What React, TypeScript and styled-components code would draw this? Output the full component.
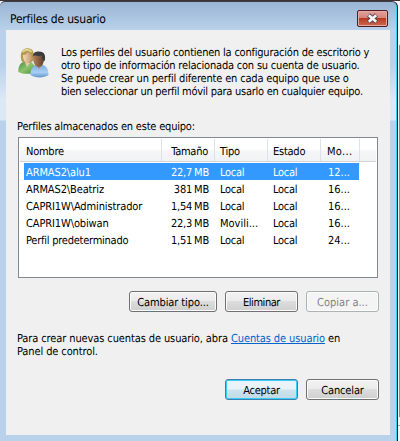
import React from "react";
import styled, { createGlobalStyle } from "styled-components";

const Global = createGlobalStyle`
  * { box-sizing: border-box; }
  body { margin: 0; background: #f4f4f4; overflow: hidden; }
`;

const Desktop = styled.div`
  width: 400px;
  height: 441px;
  display: flex;
  padding-top: 1px;
  background:
    linear-gradient(#8b8f94, #8b8f94) 399px 45px / 1px 372px no-repeat,
    linear-gradient(#a5a8ab, #a5a8ab) 398px 425px / 2px 1px no-repeat,
    #f4f4f4;
  box-shadow: inset 0 1px #3b3336;
  font: 11px/13px "DejaVu Sans Condensed", "DejaVu Sans", sans-serif;
  font-stretch: condensed;
  text-rendering: geometricPrecision;
  color: #000;
`;

const Window = styled.div`
  width: 398px;
  height: 440px;
  display: flex;
  flex-direction: column;
  padding: 1px 6px 6px;
  border-right: 1px solid #121c26;
  border-top: 1px solid #413c44;
  border-radius: 5px 6px 0 0;
  box-shadow: inset -1px 0 #2fd2f8;
  background: linear-gradient(#9ab5d4 0, #b9d1ea 28px, #b9d1ea 62px, #dce8f6 98px, #dce8f6 118px, #b9d1ea 119px);
`;

const TitleBar = styled.header`
  height: 27px;
  flex: none;
  display: flex;
  align-items: flex-start;
  justify-content: space-between;
  padding: 7px 2px 0 4px;
  width: 384px;
`;

const Fit = styled.span<{ $s?: number }>`
  letter-spacing: ${(p) => p.$s ?? 0}px;
  white-space: pre;
`;

const Title = styled.div`
  font-size: 12px;
  line-height: 18px;
`;

const Close = styled.button`
  width: 31px;
  height: 17px;
  padding: 0;
  display: grid;
  place-items: center;
  border: 1px solid #4d1c26;
  border-radius: 2px;
  box-shadow: inset 0 0 0 1px #e5aaa2;
  background: linear-gradient(#e2a29b 0, #d58378 48%, #b93a24 50%, #cc6a50 100%);
`;

const Client = styled.main`
  width: 384px;
  height: 405px;
  background: #f0f0f0;
  padding: 16px 11px 0 12px;
`;

const Intro = styled.section`
  display: flex;
  gap: 11px;
  height: 74px;
`;

const Lines = styled.div`
  display: flex;
  flex-direction: column;
`;

const Label = styled.div`
  height: 17px;
  margin-left: -1px;
`;

const List = styled.div`
  width: 360px;
  height: 141px;
  border: 1px solid #828790;
  background: #fff;
  padding: 1px;
`;

const Head = styled.div`
  display: grid;
  grid-template-columns: 142px 53px 53px 53px 39px 1fr;
  height: 23px;
  border-bottom: 1px solid #d5d5d5;
  background: linear-gradient(#fff 45%, #f5f6f8 55%, #f1f2f4);
  margin-bottom: 1px;
`;

const HeadCell = styled.div<{ $right?: boolean; $pad?: number }>`
  border-right: 1px solid #dfe1e4;
  padding: 6px ${(p) => (p.$right ? 6 : 0)}px 0 ${(p) => p.$pad ?? 5}px;
  text-align: ${(p) => (p.$right ? "right" : "left")};
  letter-spacing: -0.25px;
  white-space: nowrap;
  &:last-child { border-right: 0; }
`;

const Row = styled.div<{ $on?: boolean }>`
  display: grid;
  grid-template-columns: 138px 53px 53px 53px 38px;
  width: 335px;
  height: 17px;
  margin-left: 4px;
  line-height: 19px;
  color: ${(p) => (p.$on ? "#fff" : "#000")};
  background: ${(p) => (p.$on ? "#3399ff" : "transparent")};
`;

const Cell = styled.div<{ $right?: boolean; $pad?: number; $s?: number }>`
  padding: 0 ${(p) => (p.$right ? 6 : 0)}px 0 ${(p) => p.$pad ?? 5}px;
  text-align: ${(p) => (p.$right ? "right" : "left")};
  letter-spacing: ${(p) => p.$s ?? -0.22}px;
  word-spacing: ${(p) => (p.$right ? -1 : 0)}px;
  white-space: nowrap;
`;

const Buttons = styled.div`
  display: flex;
  justify-content: flex-end;
  gap: 8px;
  margin-top: 13px;
`;

const DialogButtons = styled(Buttons)`
  margin-top: 0;
`;

const Button = styled.button<{ $w: number; $kind?: "default" | "disabled"; $s?: number }>`
  width: ${(p) => p.$w}px;
  height: 21px;
  padding: 2px 0 0;
  font: inherit;
  font-stretch: condensed;
  text-rendering: inherit;
  line-height: 17px;
  letter-spacing: ${(p) => p.$s ?? -0.2}px;
  text-align: center;
  border-radius: 3px;
  border: 1px solid ${(p) => (p.$kind === "default" ? "#3c7fb1" : p.$kind === "disabled" ? "#adb2b5" : "#707070")};
  box-shadow: inset 0 0 0 1px ${(p) => (p.$kind === "default" ? "#38cdf8" : "#fbfbfb")};
  color: ${(p) => (p.$kind === "disabled" ? "#838383" : "#000")};
  background: ${(p) =>
    p.$kind === "default"
      ? "linear-gradient(#e9f3f8 48%, #cfe3ed 52%, #bfdae7)"
      : p.$kind === "disabled"
      ? "#f4f4f4"
      : "linear-gradient(#f2f2f2, #ebebeb 48%, #dddddd 50%, #cfcfcf)"};
`;

const Note = styled.div`
  height: 67px;
  padding-top: 20px;
  margin-left: -1px;
`;

const Link = styled.a`
  color: #0066cc;
  text-decoration: underline;
`;

const Avatar = styled.svg`
  flex: none;
  margin-top: 1px;
`;

const Users = () => (
  <Avatar width="32" height="32" viewBox="0 0 32 32">
    <defs>
      <linearGradient id="green" x2="1" y2="1"><stop stopColor="#4f8d45" /><stop offset=".5" stopColor="#8cc36c" /><stop offset="1" stopColor="#4b8a3a" /></linearGradient>
      <linearGradient id="blue" x2="0" y2="1"><stop stopColor="#77a9d8" /><stop offset=".6" stopColor="#a9cff4" /><stop offset="1" stopColor="#6395cd" /></linearGradient>
      <linearGradient id="face" x2="1"><stop stopColor="#f3d9b8" /><stop offset="1" stopColor="#c99a72" /></linearGradient>
      <linearGradient id="dark" x2="1"><stop stopColor="#b58260" /><stop offset="1" stopColor="#5c3e2c" /></linearGradient>
    </defs>
    <path d="M.3 25C.3 18 3 15.500 6 15l8 .5 3 4V26c-6 1.500-13 1-16.700-1z" fill="url(#green)" />
    <path d="M6.500 14.500L9 20l4-5z" fill="#e5c9a6" />
    <path d="M3.500 14C1.500 6 4 1.200 9.500 1.200S17 5 15 14l-3 2-7-.5z" fill="#b39a51" />
    <path d="M5 8c3 0 4-2 5-3 1 2 3.500 2 3.500 4 0 5-2 7-4 7S5 14 5 8z" fill="url(#face)" />
    <path d="M4.500 5c2.500-3 7-3 9 0" fill="none" stroke="#e4d391" strokeWidth="1.800" />
    <path d="M12.500 28c0-6 2-9.500 6.500-10.500h5c5 2 6.500 5 6.500 10.500-4 3.200-14 3.200-18 0z" fill="url(#blue)" />
    <path d="M17.500 17l3.500 5 4-5z" fill="#b58964" />
    <path d="M15 11c0-5 2.500-6 6-6s6 2 5 8c-.5 4-2.500 7-5.500 7S15 16 15 11z" fill="url(#dark)" />
    <path d="M14.800 10c0-4.500 3-5.500 6-5.500 6 0 7 4 6 9.500l-2-1-1-4.500c-3 1-7 0-8 0z" fill="#3b3b3e" />
  </Avatar>
);

const CloseMark = () => (
  <svg width="13" height="11" viewBox="0 0 13 11">
    <path d="M2.500 2l8 7M10.500 2l-8 7" stroke="#574451" strokeWidth="4.400" />
    <path d="M2.800 2.300l7.400 6.400M10.200 2.300L2.800 8.700" stroke="#f7f7f7" strokeWidth="2.600" />
  </svg>
);

const intro: [string, number][] = [
  ["Los perfiles del usuario contienen la configuración de escritorio y", -0.22],
  ["otro tipo de información relacionada con su cuenta de usuario.", -0.2],
  ["Se puede crear un perfil diferente en cada equipo que use o", -0.18],
  ["bien seleccionar un perfil móvil para usarlo en cualquier equipo.", -0.26],
];

const profiles = [
  ["ARMAS2\\alu1", "22,7 MB", "Local", "Local", "12..."],
  ["ARMAS2\\Beatriz", "381 MB", "Local", "Local", "16..."],
  ["CAPRI1W\\Administrador", "1,54 MB", "Local", "Local", "16..."],
  ["CAPRI1W\\obiwan", "22,3 MB", "Movili...", "Local", "16..."],
  ["Perfil predeterminado", "1,51 MB", "Local", "Local", "24..."],
];

export default function App() {
  return (
    <Desktop>
      <Global />
      <Window>
        <TitleBar>
          <Title><Fit $s={-0.2}>Perfiles de usuario</Fit></Title>
          <Close aria-label="Cerrar"><CloseMark /></Close>
        </TitleBar>
        <Client>
          <Intro>
            <Users />
            <Lines>
              {intro.map(([text, s]) => <Fit key={text} $s={s}>{text}</Fit>)}
            </Lines>
          </Intro>
          <Label><Fit $s={-0.2}>Perfiles almacenados en este equipo:</Fit></Label>
          <List>
            <Head>
              <HeadCell $pad={6}>Nombre</HeadCell>
              <HeadCell $right>Tamaño</HeadCell>
              <HeadCell>Tipo</HeadCell>
              <HeadCell>Estado</HeadCell>
              <HeadCell $pad={6}><Fit $s={0.3}>Mo...</Fit></HeadCell>
              <HeadCell />
            </Head>
            {profiles.map((p, i) => (
              <Row key={p[0]} $on={i === 0}>
                <Cell $pad={2} $s={i === 4 ? -0.24 : -0.12}>{p[0]}</Cell>
                <Cell $right $pad={0} $s={-0.2}>{p[1]}</Cell>
                <Cell $s={i === 3 ? 0 : -0.3}>{p[2]}</Cell>
                <Cell $s={-0.3}>{p[3]}</Cell>
                <Cell $pad={7} $s={0}>{p[4]}</Cell>
              </Row>
            ))}
          </List>
          <Buttons>
            <Button $w={88} $s={-0.1}>Cambiar tipo...</Button>
            <Button $w={73} $s={-0.45}>Eliminar</Button>
            <Button $w={73} $kind="disabled" $s={0}>Copiar a...</Button>
          </Buttons>
          <Note>
            <Fit $s={-0.11}>Para crear nuevas cuentas de usuario, abra <Link>Cuentas de usuario</Link> en{"\n"}Panel de control.</Fit>
          </Note>
          <DialogButtons>
            <Button $w={73} $kind="default" $s={-0.25}>Aceptar</Button>
            <Button $w={73} $s={-0.15}>Cancelar</Button>
          </DialogButtons>
        </Client>
      </Window>
    </Desktop>
  );
}
